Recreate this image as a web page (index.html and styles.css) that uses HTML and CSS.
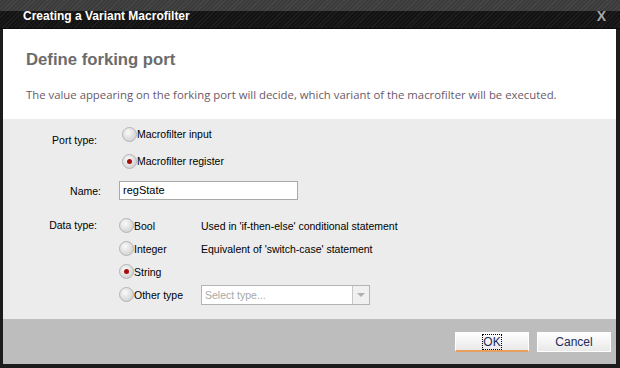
FILE: index.html
```html
<!DOCTYPE html>
<html lang="en">
<head>
  <meta charset="UTF-8" />
  <title>Creating a Variant Macrofilter</title>
  <link rel="stylesheet" href="styles.css">
</head>
<body>
  <div class="window">
    <!-- Title bar -->
    <div class="titlebar">
      <span class="title">Creating a Variant Macrofilter</span>
      <span class="close">X</span>
    </div>

    <!-- Header -->
    <div class="header">
      <h1>Define forking port</h1>
      <p>The value appearing on the forking port will decide, which variant of the macrofilter will be executed.</p>
    </div>

    <!-- Form -->
    <div class="content">
      <div class="row row-port">
        <div class="label">Port type:</div>
        <div class="options">
          <label class="radio"><span class="dot"></span>Macrofilter input</label>
          <label class="radio checked"><span class="dot"></span>Macrofilter register</label>
        </div>
      </div>

      <div class="row row-name">
        <div class="label">Name:</div>
        <div class="textbox">regState</div>
      </div>

      <div class="row row-data">
        <div class="label">Data type:</div>
        <div class="types">
          <label class="radio"><span class="dot"></span>Bool</label>
          <span class="hint">Used in 'if-then-else' conditional statement</span>
          <label class="radio"><span class="dot"></span>Integer</label>
          <span class="hint">Equivalent of 'switch-case' statement</span>
          <label class="radio checked"><span class="dot"></span>String</label>
          <span></span>
          <label class="radio"><span class="dot"></span>Other type</label>
          <div class="select">
            <span class="placeholder">Select type...</span>
            <span class="arrow"></span>
          </div>
        </div>
      </div>
    </div>

    <!-- Footer -->
    <div class="footer">
      <button class="btn btn-ok"><span>OK</span></button>
      <button class="btn">Cancel</button>
    </div>
  </div>
</body>
</html>
```

FILE: styles.css
```css
* {
  box-sizing: border-box;
}

body {
  margin: 0;
  background: #1a1a1a;
  font-family: "Liberation Sans", Arial, sans-serif;
}

.window {
  width: 620px;
  height: 368px;
  background: #1c1c1c;
  border: 3px solid #1c1c1c;
  border-top: none;
  border-right-width: 4px;
  border-bottom-width: 4px;
  display: flex;
  flex-direction: column;
}

/* Title bar */
.titlebar {
  height: 29px;
  margin: 0 -4px 0 -3px;
  display: flex;
  align-items: flex-end;
  justify-content: space-between;
  padding: 0 14px 5px 23px;
  background:
    repeating-linear-gradient(135deg, rgba(255,255,255,0.05) 0 1px, transparent 1px 3px),
    linear-gradient(#3c3c3c 0 11px, #131313 11px);
  border-bottom: 1px solid #0a0a0a;
}

.title {
  color: #fff;
  font-weight: bold;
  font-size: 12px;
  line-height: 14px;
}

.close {
  color: #a6a6a6;
  font-weight: bold;
  font-size: 14px;
  line-height: 14px;
}

/* Header */
.header {
  background: #fff;
  height: 90px;
  padding: 21px 23px 0;
}

.header h1 {
  margin: 0;
  font-size: 16.7px;
  font-weight: bold;
  color: #6b6b6b;
  line-height: 20px;
}

.header p {
  margin: 17px 0 0;
  font-family: "Open Sans", sans-serif;
  font-size: 11.35px;
  color: #6a5a6a;
}

/* Form */
.content {
  background: #ececec;
  height: 200px;
  padding-top: 8px;
  font-size: 10.5px;
  color: #000;
}

.row {
  display: flex;
}

.label {
  width: 94px;
  text-align: right;
  flex: none;
}

.row-port .label {
  padding-top: 7px;
}

.options {
  display: flex;
  flex-direction: column;
  gap: 13px;
  margin-left: 25px;
}

.radio {
  display: flex;
  align-items: center;
  height: 14px;
  line-height: 14px;
}

.dot {
  width: 15px;
  height: 15px;
  border-radius: 50%;
  background: radial-gradient(circle at 40% 35%, #fafafa, #d6d6d6 70%);
  border: 1px solid #b4b4b4;
  display: flex;
  align-items: center;
  justify-content: center;
}

.radio.checked .dot::after {
  content: "";
  width: 5px;
  height: 5px;
  border-radius: 50%;
  background: #a50d0d;
}

.row-name {
  margin-top: 13px;
  align-items: center;
}

.row-name .label {
  width: 98px;
}

.textbox {
  margin-left: 18px;
  width: 179px;
  height: 19px;
  background: #fff;
  border: 1px solid #a9a9a9;
  padding: 0 3px;
  font-size: 11px;
  line-height: 17px;
}

.row-data {
  margin-top: 14px;
}

.row-data .label {
  padding-top: 5px;
}

.types {
  margin-left: 22px;
  display: grid;
  grid-template-columns: 82px auto;
  grid-auto-rows: 23px;
  align-items: center;
}

.hint {
  line-height: 14px;
}

.select {
  width: 169px;
  height: 20px;
  background: #fff;
  border: 1px solid #b4b4b4;
  display: flex;
  justify-content: space-between;
  align-items: center;
  padding-left: 3px;
}

.placeholder {
  color: #a8a8a8;
}

.arrow {
  width: 17px;
  height: 18px;
  border-left: 1px solid #c8c8c8;
  background: #f0f0f0;
  display: flex;
  align-items: center;
  justify-content: center;
}

.arrow::after {
  content: "";
  border-left: 4px solid transparent;
  border-right: 4px solid transparent;
  border-top: 4px solid #b0b0b0;
}

/* Footer */
.footer {
  flex: 1;
  background: #bdbdbd;
  display: flex;
  justify-content: flex-end;
  gap: 8px;
  padding: 13px 5px 0 0;
}

.btn {
  width: 74px;
  height: 20px;
  border: 1px solid #fff;
  background: linear-gradient(#fefefe, #e9e9e9);
  font-family: "Liberation Sans", Arial, sans-serif;
  font-size: 12px;
  color: #1b2b5b;
  padding: 0;
}

.btn-ok {
  border-bottom: 2px solid #e8a060;
}

.btn-ok span {
  outline: 1px dotted #000;
}
```
